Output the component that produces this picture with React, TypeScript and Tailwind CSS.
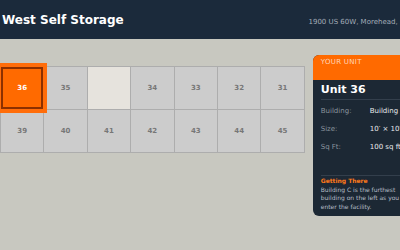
import React from 'react';

type Cell = { id: string; label: string; kind: 'unit' | 'selected' | 'blank' };

const rows: Cell[][] = [
  [
    { id: '36', label: '36', kind: 'selected' },
    { id: '35', label: '35', kind: 'unit' },
    { id: 'gap', label: '', kind: 'blank' },
    { id: '34', label: '34', kind: 'unit' },
    { id: '33', label: '33', kind: 'unit' },
    { id: '32', label: '32', kind: 'unit' },
    { id: '31', label: '31', kind: 'unit' },
  ],
  ['39', '40', '41', '42', '43', '44', '45'].map((n) => ({ id: n, label: n, kind: 'unit' as const })),
];

const details = [
  { label: 'Building:', value: 'Building C' },
  { label: 'Size:', value: "10′ × 10′" },
  { label: 'Sq Ft:', value: '100 sq ft' },
];

const UnitCell: React.FC<{ cell: Cell }> = ({ cell }) => {
  if (cell.kind === 'blank') {
    return <div className="bg-[#e6e3dd]" />;
  }
  if (cell.kind === 'selected') {
    return (
      <div className="relative z-10 flex items-center justify-center border-2 border-[#8c3000] bg-[#ff6a00] text-[7px] font-bold text-white shadow-[0_0_0_4px_#ff6d0a]">
        {cell.label}
      </div>
    );
  }
  return (
    <div className="flex items-center justify-center bg-[#cccccc] text-[7px] font-bold text-[#777777]">
      {cell.label}
    </div>
  );
};

export default function App() {
  return (
    <div className="w-[400px] h-[250px] overflow-hidden bg-[#c8c8c0] font-['DejaVu_Sans',sans-serif]">
      <header className="flex h-[39px] w-[449px] items-baseline justify-between bg-[#1b2a3b] pl-[2px] pr-4 pt-[14px]">
        <h1 className="text-[12px] font-bold leading-[13px] text-white">West Self Storage</h1>
        <span className="whitespace-nowrap text-[7px] text-[#a3adb8]">1900 US 60W, Morehead, KY 40351</span>
      </header>

      <main className="flex w-[460px] items-start gap-2 pt-4">
        <div className="mt-[11px] grid grid-cols-[repeat(7,42.4px)] grid-rows-[repeat(2,42px)] gap-px bg-[#adadad] p-px">
          {rows.flat().map((cell) => (
            <UnitCell key={cell.id} cell={cell} />
          ))}
        </div>

        <aside className="w-[106px] overflow-hidden rounded-md bg-[#1c2834]">
          <div className="h-[25px] bg-[#ff6a00] px-2 pt-[3px] text-[7px] leading-[8px] tracking-[0.3px] text-[#ffd6ba]">
            YOUR UNIT
          </div>
          <div className="px-2 pb-[4px]">
            <h2 className="border-b border-[#333f4c] pt-[3px] pb-[3px] text-[11px] font-bold leading-[13px] text-white">
              Unit 36
            </h2>
            <div className="mt-[2px]">
              {details.map((d) => (
                <div key={d.label} className="flex h-[18px] items-center text-[7px] whitespace-nowrap">
                  <span className="w-[49px] text-[#8b949e]">{d.label}</span>
                  <span className="text-[#e8eaed]">{d.value}</span>
                </div>
              ))}
            </div>
            <div className="mt-[19px] border-t border-[#333f4c] pt-px text-[6px] leading-[8.7px]">
              <div className="font-bold text-[#ff7a1a]">Getting There</div>
              <p className="text-[#b6bec7]">Building C is the furthest building on the left as you enter the facility.</p>
            </div>
          </div>
        </aside>
      </main>
    </div>
  );
}
